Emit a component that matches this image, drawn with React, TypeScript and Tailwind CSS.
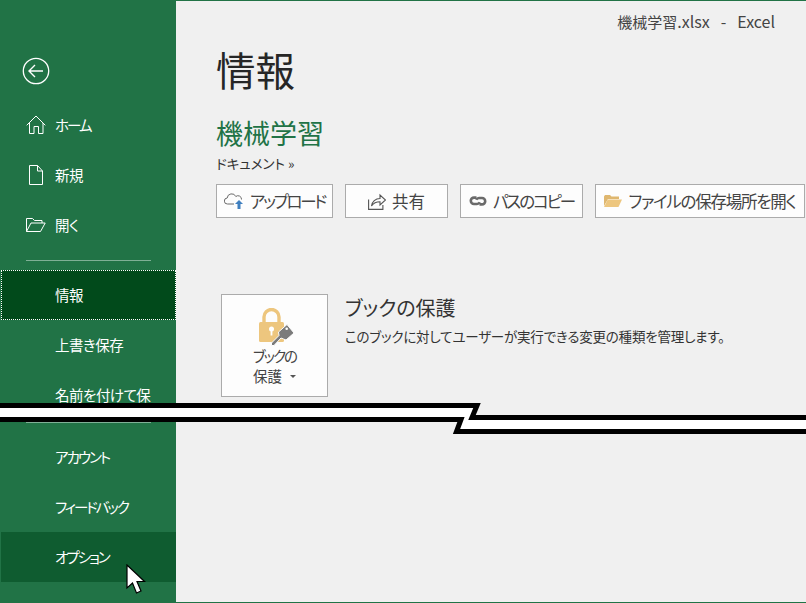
import React from 'react';

const font = { fontFamily: '"Noto Sans CJK JP", "Noto Sans", sans-serif' };

function BackIcon() {
  return (
    <svg width="28" height="28" viewBox="0 0 28 28" fill="none" stroke="#fff" strokeWidth="1.3">
      <circle cx="14" cy="14" r="12.7" />
      <path d="M7 14h14M13 8l-6 6 6 6" strokeWidth="1.4" />
    </svg>
  );
}

function HomeIcon() {
  return (
    <svg width="20" height="20" viewBox="0 0 20 20" fill="none" stroke="#fff" strokeWidth="1">
      <path d="M.7 10.300 10 1l9.300 9.300M3.500 8v10.500h4.500v-7h4.500v7h4.500V8" />
    </svg>
  );
}

function PageIcon() {
  return (
    <svg width="20" height="20" viewBox="0 0 20 20" fill="none" stroke="#fff" strokeWidth="1">
      <path d="M3.500.5h8l5 5.500v13.500h-13zM11.500.5v5.500h5" />
    </svg>
  );
}

function FolderIcon() {
  return (
    <svg width="20" height="20" viewBox="0 0 20 20" fill="none" stroke="#fff" strokeWidth="1">
      <path d="M.5 16.500V3.500h6l2 2h7.500v2.500M.5 16.500h14l4.700-8.500H5z" />
    </svg>
  );
}

function UploadIcon() {
  return (
    <svg width="20" height="18" viewBox="0 0 20 18" fill="none">
      <path d="M10 12H3.500a3 3 0 0 1-.3-6A4.500 4.500 0 0 1 11.800 4.500 3.500 3.500 0 0 1 17.500 7.500" stroke="#6b6b6b" strokeWidth="1" />
      <path d="M15 8l-4 4h2.500v5h3v-5H19z" fill="#3f7fbf" />
    </svg>
  );
}

function ShareIcon() {
  return (
    <svg width="18" height="18" viewBox="0 0 18 18" fill="none" stroke="#555" strokeWidth="1.100">
      <path d="M.6 7.500V17.400h14.300v-4.500" />
      <path d="M3.500 14c.5-4.500 4-7.500 8.500-7.500V3l5.500 5-5.500 5V9.800c-3.500 0-6.500 1.300-8.500 4.200z" />
    </svg>
  );
}

function LinkIcon() {
  return (
    <svg width="18" height="12" viewBox="0 0 18 12" fill="none" stroke="#6a6a6a" strokeWidth="2.600">
      <path d="M7.500 2.600H5a3.200 3.200 0 0 0 0 6.400h3a3.200 3.200 0 0 0 2.800-1.800" />
      <path d="M10.500 9.400H13a3.200 3.200 0 0 0 0-6.400h-3a3.200 3.200 0 0 0-2.800 1.800" />
    </svg>
  );
}

function YellowFolder() {
  return (
    <svg width="18" height="14" viewBox="0 0 18 14">
      <path d="M0 2.500 1 1h5l1.500 1.500H15V5H4L0 12z" fill="#dfb76f" />
      <path d="M0 13l3.700-7.500H18L14.500 13z" fill="#edc67e" />
    </svg>
  );
}

function LockKeyIcon() {
  return (
    <svg width="37" height="38" viewBox="0 0 37 38">
      <path d="M5 15V9a7.500 7.500 0 0 1 15 0V15" fill="none" stroke="#edc67e" strokeWidth="3.400" />
      <rect x="0" y="14" width="25" height="20" rx="1.500" fill="#edc67e" />
      <circle cx="12.500" cy="21" r="2.500" fill="#fff" />
      <rect x="11.600" y="21" width="1.800" height="6.500" fill="#fff" />
      <path d="M28 16.500 35 25 27 32 24.500 31 22 30 15 37.500H12.500V35L20 27.500 19.500 24Z" fill="#7b7b7b" stroke="#fdfdfd" strokeWidth="1" />
      <circle cx="27.700" cy="20.800" r="1.300" fill="#fdfdfd" />
    </svg>
  );
}

function MenuItem({ label, icon, active, hover, kana }: { label: string; icon?: React.ReactNode; active?: boolean; hover?: boolean; kana?: boolean }) {
  return (
    <div
      className={`h-[50px] ml-[1px] flex items-center pl-[25px] text-[14.500px] text-white ${active ? 'bg-[#014a1b] border border-dotted border-white' : ''} ${hover ? 'bg-[#0f5c30]' : ''}`}
    >
      <div className={`${active ? 'w-[28px]' : 'w-[29px]'} shrink-0 flex items-center`}>{icon}</div>
      <span className={`whitespace-nowrap ${kana ? 'tracking-[-2px]' : 'tracking-[-0.5px]'}`}>{label}</span>
    </div>
  );
}

function ToolButton({ icon, label, width, tracking }: { icon: React.ReactNode; label: string; width: string; tracking: string }) {
  return (
    <div className={`${width} h-[34px] shrink-0 flex items-center justify-center gap-[6px] bg-[#fdfdfd] border border-[#ababab] text-[16.500px] text-[#444] whitespace-nowrap`}>
      {icon}
      <span className={tracking}>{label}</span>
    </div>
  );
}

export default function App() {
  return (
    <div className='relative w-[806px] h-[603px] overflow-hidden flex bg-[#217346] [font-feature-settings:"palt"]' style={font}>
      {/* Sidebar */}
      <div className="w-[176px] shrink-0 flex flex-col pt-[57px]">
        <div className="pl-[22px] h-[43px]"><BackIcon /></div>
        <MenuItem label="ホーム" icon={<HomeIcon />} kana />
        <MenuItem label="新規" icon={<PageIcon />} />
        <MenuItem label="開く" icon={<FolderIcon />} />
        <div className="ml-[26px] mr-[25px] mt-[10px] mb-[9px] h-px bg-[#7fb096]" />
        <MenuItem label="情報" active />
        <MenuItem label="上書き保存" />
        <MenuItem label="名前を付けて保" />
        <div className="ml-[26px] mr-[25px] mt-[2px] mb-[9px] h-px bg-[#7fb096]" />
        <MenuItem label="アカウント" kana />
        <MenuItem label="フィードバック" kana />
        <MenuItem label="オプション" hover kana />
      </div>

      {/* Main */}
      <div className="flex-1 mt-[1px] mb-[1px] bg-[#f0f0f0] min-w-0 flex flex-col">
        <div className="h-[40px] flex justify-end gap-[11px] pr-[31px] pt-[10px] text-[16px] leading-[20px] text-[#444]">
          <span><span className="text-[15px]">機械学習</span>.xlsx</span>
          <span>-</span>
          <span>Excel</span>
        </div>
        <div className="pl-[40px]">
          <h1 className="text-[39.500px] leading-[56px] text-[#262626]">情報</h1>
          <div className="mt-[18px] text-[27px] leading-[36px] text-[#217346]">機械学習</div>
          <div className="mt-[2px] text-[13.500px] leading-[20px] text-[#333]">ドキュメント »</div>
          <div className="mt-[11px] flex gap-[12px] w-[640px]">
            <ToolButton icon={<UploadIcon />} label="アップロード" width="w-[117px]" tracking="tracking-[-2.300px]" />
            <ToolButton icon={<ShareIcon />} label="共有" width="w-[103px]" tracking="tracking-normal" />
            <ToolButton icon={<LinkIcon />} label="パスのコピー" width="w-[123px]" tracking="tracking-[-2.100px]" />
            <ToolButton icon={<YellowFolder />} label="ファイルの保存場所を開く" width="w-[210px]" tracking="tracking-[-1.250px]" />
          </div>
          <div className="mt-[76px] ml-[5px] flex">
            <div className="w-[107px] h-[103px] shrink-0 bg-[#fdfdfd] border border-[#ababab] flex flex-col items-center pt-[13px] text-[14.500px] leading-[20px] text-[#444]">
              <div className="pl-[6px]"><LockKeyIcon /></div>
              <div className="tracking-[-2px]">ブックの</div>
              <div className="flex items-center gap-[8px]">
                <span className="tracking-normal">保護</span>
                <svg width="6" height="3" viewBox="0 0 6 3"><path d="M0 0h6L3 3z" fill="#555" /></svg>
              </div>
            </div>
            <div className="ml-[17px]">
              <div className="pt-[1px] text-[20px] leading-[26px] text-[#333]">ブックの保護</div>
              <div className="mt-[5px] text-[13.500px] leading-[20px] tracking-[-0.2px] text-[#333] whitespace-nowrap">このブックに対してユーザーが実行できる変更の種類を管理します。</div>
            </div>
          </div>
        </div>
      </div>

      {/* Break mark laid over the page */}
      <svg className="absolute left-0 top-[400px]" width="806" height="40" viewBox="0 0 806 40">
        <path d="M-5 5.500H477L472 17.500H811V31.500H456.500L461 19.500H-5Z" fill="#fff" stroke="#000" strokeWidth="5" />
      </svg>

      {/* Mouse pointer */}
      <svg className="absolute left-[126px] top-[564px]" width="20" height="32" viewBox="0 0 20 32">
        <path d="M1 1v23l5.500-5 4 10 4.500-2-4-9.500h7.500z" fill="#fff" stroke="#000" strokeWidth="1.200" />
      </svg>
    </div>
  );
}
